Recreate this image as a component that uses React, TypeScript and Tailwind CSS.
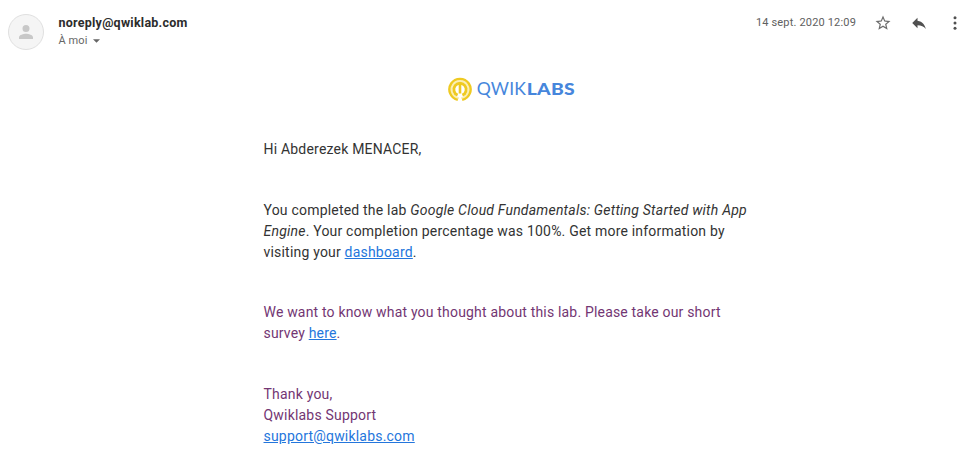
import React from "react";

const link = "text-[#2476dc] underline";

function Logo() {
  return (
    <svg width="130" height="28" viewBox="0 0 130 28" className="block" role="img" aria-label="Qwiklabs">
      <circle cx="12" cy="13.5" r="8.800" fill="none" stroke="#fbeeb4" strokeWidth="2" />
      <g fill="none" stroke="#efca22">
        <path d="M9.8 23.800A10.6 10.6 0 1 1 14.2 23.800" strokeWidth="2.400" />
        <path d="M9.6 19.200A6.2 6.2 0 1 1 14.4 19.200" strokeWidth="2.9" />
        <path d="M12 8V17.5" strokeWidth="2.6" />
      </g>
      <path d="M10.8 18.5h2.400v7h-2.400z" fill="#fff" />
      <g fill="#4686dc" fontFamily="Lato, sans-serif">
        <text x="28.700" y="19" fontSize="17.5" textLength="49.5" lengthAdjust="spacingAndGlyphs">QWIK</text>
        <text x="78.800" y="19" fontSize="17.5" textLength="48" lengthAdjust="spacingAndGlyphs" fontWeight="900">LABS</text>
      </g>
    </svg>
  );
}

export default function App() {
  return (
    <main className="flex h-[463px] w-[977px] flex-col overflow-hidden bg-white font-['Roboto',sans-serif] text-[#333]">
      <header className="flex h-[60px] items-start pl-2">
        <div className="mt-[14px] flex size-9 items-center justify-center rounded-full border border-[#e0e0e0] bg-[#f5f5f5]">
          <svg viewBox="4 4 16 16" className="size-[14px]" fill="#c8c8c8"><path d="M12 12a4 4 0 1 0 0-8 4 4 0 0 0 0 8zm0 2c-2.67 0-8 1.34-8 4v2h16v-2c0-2.66-5.33-4-8-4z" /></svg>
        </div>
        <div className="ml-[14.5px] mt-[13px]">
          <div className="text-[12.5px] leading-[19px] font-bold tracking-[0.25px] text-[#2c2c2c]">noreply@qwiklab.com</div>
          <div className="flex items-center pt-px text-[11px] leading-[16px] tracking-[0.1px] text-[#666]">À moi
            <svg viewBox="0 0 8 4" className="ml-[5px] h-1 w-[7px]" fill="#666"><path d="M0 0h8L4 4z" /></svg>
          </div>
        </div>
        <div className="mt-[13px] mr-[13px] ml-auto flex items-center text-[#606060]">
          <span className="pt-px text-[11px] leading-[18px] tracking-[0.17px]">14 sept. 2020 12:09</span>
          <svg viewBox="0 0 24 24" className="ml-[18px] size-[18px]" fill="#6c6c6c"><path d="M22 9.24l-7.19-.62L12 2 9.19 8.63 2 9.24l5.46 4.73L5.82 21 12 17.27 18.18 21l-1.63-7.03L22 9.24zM12 15.4l-3.76 2.27 1-4.28-3.32-2.88 4.38-.38L12 6.1l1.71 4.04 4.38.38-3.32 2.88 1 4.28L12 15.4z" /></svg>
          <svg viewBox="0 0 24 24" className="ml-[18px] size-[18px]" fill="#505050"><path d="M10 9V5l-7 7 7 7v-4.1c5 0 8.500 1.600 11 5.100-1-5-4-10-11-11z" /></svg>
          <svg viewBox="0 0 24 24" className="ml-[18px] size-[18px]" fill="#505050"><circle cx="12" cy="5" r="2" /><circle cx="12" cy="12" r="2" /><circle cx="12" cy="19" r="2" /></svg>
        </div>
      </header>
      <article className="ml-[263.5px] flex w-[495px] flex-col text-[14px] leading-[21px] tracking-[0.2px]">
        <div className="flex h-[79px] pt-4 pl-[184px]"><Logo /></div>
        <p>Hi Abderezek MENACER,</p>
        <p className="mt-10 whitespace-nowrap">You completed the lab <em className="tracking-[0.22px]">Google Cloud Fundamentals: Getting Started with App<br />Engine</em>. Your completion percentage was 100%. Get more information by<br />visiting your <a className={link}>dashboard</a>.</p>
        <p className="mt-[39px] tracking-[0.18px] text-[#733673]">We want to know what you thought about this lab. Please take our short<br />survey <a className={link}>here</a>.</p>
        <p className="mt-10 text-[#733673]">Thank you,<br />Qwiklabs Support<br /><a className={link}>support@qwiklabs.com</a></p>
      </article>
    </main>
  );
}
